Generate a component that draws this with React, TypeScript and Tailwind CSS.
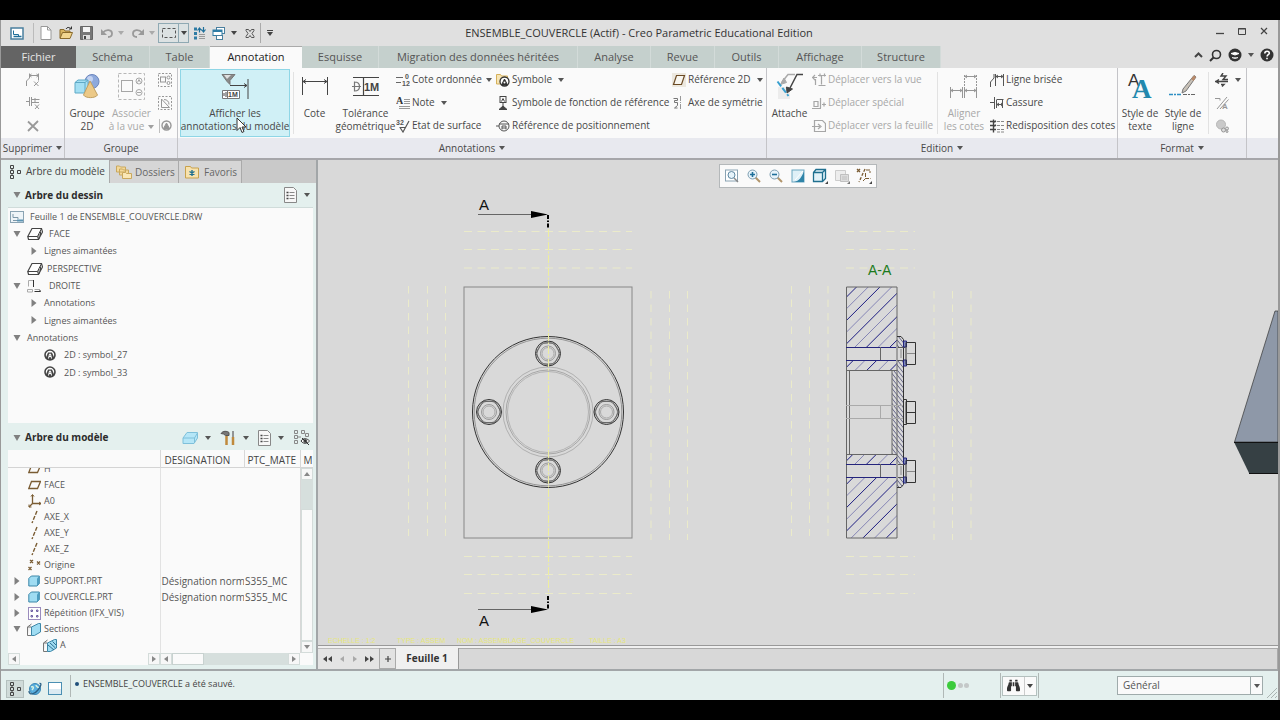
import type { ReactNode } from 'react';
import { FaBinoculars } from 'react-icons/fa';
import { clsx } from 'clsx';

type IconProps = { w?: number; h?: number; className?: string; children?: ReactNode };

const Svg = ({ w = 16, h = w, className, children }: IconProps) => (
  <svg width={w} height={h} viewBox={`0 0 ${w} ${h}`} fill="none" stroke="#555" className={clsx('shrink-0', className)}>
    {children}
  </svg>
);

const Caret = ({ className = 'text-[#555]' }: { className?: string }) => (
  <svg width="6" height="4" viewBox="0 0 6 4" className={clsx('shrink-0', className)}>
    <path d="M0 0h6L3 4z" fill="currentColor" />
  </svg>
);

const Arrow = ({ open }: { open?: boolean }) => (
  <svg width="8" height="8" viewBox="0 0 8 8" fill="#808080" className="shrink-0">
    {open ? <path d="M0.500 1h7L4 7z" /> : <path d="M1.500 0v8L6.500 4z" />}
  </svg>
);

/* ---------- quick access icons ---------- */

const LogoIcon = () => (
  <Svg w={14} h={13}>
    <rect x="1" y="1" width="12" height="11" fill="#fff" stroke="#4a7f9e" strokeWidth="1.500" />
    <path d="M3.500 3.500v4h5v2" stroke="#1f6f9a" />
    <path d="M3.500 9.500h8" stroke="#1f6f9a" strokeWidth="1.500" />
  </Svg>
);

const NewIcon = () => (
  <Svg w={12} h={14}>
    <path d="M1 .5h6.500l3.500 3.500v9.500h-10z" fill="#fff" stroke="#999" />
    <path d="M7.500.5v3.500h3.500" stroke="#999" />
  </Svg>
);

const OpenIcon = () => (
  <Svg w={14} h={14}>
    <path d="M1 12V3.500h4l1 1.500h5v2" fill="#d9b561" stroke="#8a6b2c" />
    <path d="M1 12.500l2.500-6h10l-2.500 6z" fill="#f2d68f" stroke="#8a6b2c" />
    <path d="M7 3c1-2 3-2 5-.5M12.500.5v2.500h-2.500" stroke="#333" />
  </Svg>
);

const SaveIcon = () => (
  <Svg w={13} h={14}>
    <path d="M.5.5h12v13h-12z" fill="#777" stroke="#666" />
    <path d="M3 1h7v5H3z" fill="#f4f4f4" stroke="none" />
    <path d="M3 9h7v4.500H3z" fill="#ddd" stroke="none" />
    <path d="M4 10h2v3H4z" fill="#444" stroke="none" />
  </Svg>
);

const UndoIcon = ({ flip }: { flip?: boolean }) => (
  <Svg w={14} h={12} className={flip ? '-scale-x-100' : ''}>
    <path d="M3 5.500C6 2 12 2.500 12 6.500c0 2.500-2 3.500-4 3.500" stroke="#9a9a9a" strokeWidth="1.800" />
    <path d="M1 2v6h6z" fill="#9a9a9a" stroke="none" />
  </Svg>
);

const SelectIcon = () => (
  <Svg w={14} h={10}>
    <rect x=".5" y=".5" width="13" height="9" stroke="#555" strokeDasharray="3 2" />
  </Svg>
);

const RegenIcon = () => (
  <Svg w={13} h={14}>
    <path d="M1 3h3M1 7.500h3M1 12h3" stroke="#2f7ca5" strokeWidth="3" />
    <path d="M6 8.500h6M6 10.500h6M6 12.500h6" stroke="#999" />
    <path d="M6.500 6.500V2.500M4.500 4.500l2-2.500 2 2.500M10.500 1v4.500M8.500 3.500l2 2.500 2-2.500" stroke="#1f6f9a" strokeWidth="1.200" />
  </Svg>
);

const WindowsIcon = () => (
  <Svg w={14} h={13}>
    <rect x="4.500" y=".5" width="8" height="6" fill="#fff" stroke="#4a7f9e" />
    <rect x="1" y="3" width="9" height="5.500" fill="#fff" stroke="#2f7ca5" />
    <path d="M1 4h9" stroke="#2f7ca5" strokeWidth="2" />
    <rect x="4.500" y="8.500" width="6" height="4" fill="#fff" stroke="#4a7f9e" />
  </Svg>
);

const CloseWinIcon = () => (
  <Svg w={10} h={9}>
    <path d="M1 .5h2.500L5 2.500 6.500.5H9v1L7 4.500l2 3v1H6.500L5 6.500 3.500 8.500H1v-1l2-3-2-3z" stroke="#555" />
  </Svg>
);

/* ---------- ribbon icons ---------- */

const DelJogIcon = () => (
  <Svg w={14} h={14} className="opacity-60">
    <path d="M.5 13V8l3-3V.500M12.500 .5v7M3.500 2.500h9M5.500 1L3.500 2.500 5.500 4M10.500 1l2 1.500-2 1.500M8 8.500l4.500 4.500M12.500 8.500L8 13" />
  </Svg>
);
const DelBreakIcon = () => (
  <Svg w={14} h={14} className="opacity-60">
    <path d="M0 5.500h3M3.500 1v9M5.500 1v9M5.500 3.500h8M6 6.500h7M9 2v4M9 8.500l4 4.500M13 8.500L9 13" />
  </Svg>
);
const CrossIcon = () => (
  <Svg w={12} h={12}>
    <path d="M1 1.500L11 11M11 1L1 11" stroke="#999" strokeWidth="1.800" />
  </Svg>
);

const GroupIcon = () => (
  <Svg w={26} h={26}>
    <circle cx="18" cy="7.500" r="7" fill="#8ea9dc" stroke="#6c86bd" />
    <circle cx="16" cy="5" r="3" fill="#c3d2f1" stroke="none" />
    <path d="M1 8.500l3-2.500h10v10l-3 3H1z" fill="#a4dff3" stroke="#5ea9c6" />
    <path d="M1 8.500h10v10M11 8.500L14 6" stroke="#5ea9c6" />
    <path d="M16 7l7.500 14c-2 3.500-12 3.500-14 0z" fill="#ecc987" stroke="#c0a063" />
  </Svg>
);

const AssocIcon = () => (
  <Svg w={28} h={28} className="opacity-50">
    <rect x=".5" y=".5" width="26" height="26" stroke="#777" strokeDasharray="3 2" />
    <rect x="3.500" y="7.500" width="11" height="11" />
    <circle cx="21" cy="8" r="3" />
    <path d="M19.500 9.500l1.500-3 1.500 3" />
    <circle cx="21" cy="19.500" r="3" />
    <path d="M19 19.500h4" />
  </Svg>
);

const SmallGroup1 = () => (
  <Svg w={14} h={14} className="opacity-60">
    <rect x=".5" y=".5" width="13" height="13" strokeDasharray="2 1.500" />
    <rect x="2.500" y="4" width="5" height="5" />
    <circle cx="10.500" cy="4.500" r="1.500" />
    <circle cx="10.500" cy="10" r="1.500" />
  </Svg>
);
const SmallGroup2 = () => (
  <Svg w={14} h={14} className="opacity-60">
    <rect x=".5" y=".5" width="13" height="13" strokeDasharray="2 1.500" />
    <path d="M3.500 3v8.500h8zM6 3.500c3 0 5 2 5 5" />
  </Svg>
);
const SmallGroup3 = () => (
  <Svg w={14} h={14} className="opacity-60">
    <path d="M1.500 0v14" stroke="#999" />
    <circle cx="8.500" cy="6.500" r="4.500" strokeWidth="1.400" />
    <path d="M5.500 9.500L8.500 4l3 5.500z" fill="#555" />
  </Svg>
);

const ShowAnnotIcon = () => (
  <Svg w={28} h={28}>
    <path d="M1 1.500h13l-5 6v4l-3-3z" fill="#8a8a8a" stroke="#777" />
    <path d="M3 2h7l-4 4z" fill="#e0e0e0" stroke="none" />
    <path d="M9 12.500h17M23 10.500l3 2-3 2M27 6v20" stroke="#444" />
    <path d="M1.500 17.500h17v8h-17zM6.500 17.500v8" fill="#fff" stroke="#777" />
    <path d="M3 20v3M5 19v5" stroke="#444" />
    <text x="7" y="24" fontSize="7" fontWeight="700" fill="#444" stroke="none" fontFamily="Liberation Sans, sans-serif">1M</text>
  </Svg>
);

const DimIcon = () => (
  <Svg w={28} h={28}>
    <path d="M1.500 4v18M26.500 4v18M2 8.500h24M5 6.500L2 8.500l3 2M23 6.500l3 2-3 2" stroke="#444" />
  </Svg>
);

const TolIcon = () => (
  <Svg w={28} h={28}>
    <path d="M1 4.500h26M1 22.500h26M11.500 5v17" stroke="#444" strokeWidth="1.200" />
    <path d="M0 13.500h9M2.500 8.500v10M2.500 9c3.500 0 5 2 5 4.500S6 18 2.500 18" stroke="#777" strokeWidth="1.200" />
    <text x="12" y="18" fontSize="11" fontWeight="700" fill="#444" stroke="none" fontFamily="Liberation Sans, sans-serif">1M</text>
  </Svg>
);

const OrdIcon = () => (
  <Svg w={14} h={14}>
    <path d="M0 4.500h7M0 9.500h5" stroke="#666" />
    <text x="9" y="6" fontSize="7" fontWeight="700" fill="#555" stroke="none" fontFamily="Liberation Sans, sans-serif">0</text>
    <text x="6" y="13" fontSize="7" fontWeight="700" fill="#555" stroke="none" fontFamily="Liberation Sans, sans-serif">12</text>
  </Svg>
);
const NoteIcon = () => (
  <Svg w={14} h={14}>
    <text x="0" y="8" fontSize="10" fontWeight="700" fill="#333" stroke="none" fontFamily="Liberation Serif, serif">A</text>
    <path d="M8 3.500h6M8 5.500h6M8 7.500h6M3 10.500h11M3 12.500h11" stroke="#999" />
  </Svg>
);
const SurfIcon = () => (
  <Svg w={14} h={14}>
    <text x="0" y="6" fontSize="7" fontWeight="700" fill="#555" stroke="none" fontFamily="Liberation Sans, sans-serif">32</text>
    <path d="M3.500 8.500h6M4 8.500l3 4.500L13 2" strokeWidth="1.200" />
  </Svg>
);
const SymbolIcon = () => (
  <Svg w={14} h={14}>
    <path d="M.5 11V1.500h4l1 1.500h6v8z" fill="#f7e5b4" stroke="#d5b05a" />
    <circle cx="8.500" cy="8.500" r="4.500" fill="#fff" stroke="#333" strokeWidth="1.300" />
    <path d="M5.500 12l3-6 3 6z" fill="#333" stroke="#333" />
    <circle cx="8.500" cy="9.500" r="1" fill="#fff" stroke="none" />
  </Svg>
);
const DatumFeatIcon = () => (
  <Svg w={14} h={14}>
    <rect x="4" y=".5" width="6" height="6" stroke="#444" />
    <path d="M5.500 5.500l1.500-3 1.500 3" stroke="#444" />
    <path d="M7 6.500v4M3 13.500h8L7 10z" fill="#444" stroke="#444" />
  </Svg>
);
const DatumTargetIcon = () => (
  <Svg w={14} h={14}>
    <circle cx="8" cy="7" r="5" />
    <path d="M0 7h3M3 5h10M6 10.500v-3.500h4v3.500M6 9h4" />
  </Svg>
);
const Ref2DIcon = () => (
  <Svg w={14} h={14}>
    <rect width="14" height="14" fill="#ece8df" stroke="none" />
    <path d="M4.500 2.500h8l-3 9H1.500z" fill="#f8f6f0" stroke="#6b4a24" strokeWidth="1.200" />
  </Svg>
);
const AxisSymIcon = () => (
  <Svg w={14} h={14}>
    <path d="M1.500 2.500h4v2h-3v2h3v3l-3 2.500h3" stroke="#777" />
    <path d="M8.500 0v14" stroke="#999" strokeDasharray="5 1 1 1" />
  </Svg>
);

const AttachIcon = () => (
  <Svg w={28} h={28}>
    <rect x="2" y="14" width="12" height="12" fill="#ececec" stroke="none" />
    <path d="M19 1.500h-7L6 9" stroke="#aaa" strokeWidth="1.500" />
    <path d="M8 5L4.500 11.500l6-2z" fill="#aaa" stroke="#aaa" />
    <path d="M27 1.500h-6L14 15" stroke="#444" strokeWidth="1.500" />
    <path d="M10.500 14l.5 6 5.500-4z" fill="#444" stroke="#444" />
    <path d="M1.500 8.500l11 14.500" stroke="#3aa0cf" strokeWidth="2" strokeDasharray="6 2" />
  </Svg>
);

const MoveViewIcon = () => (
  <Svg w={14} h={14} className="opacity-50">
    <path d="M0 4.500h5M3 2L.5 4.500 3 7M6 2.500h8M9.500 2.500v9M6.500 12.500h7M3.500 6v6M8 .5v3M12.500 .5v3" strokeWidth="1.200" />
  </Svg>
);
const MoveSpecIcon = () => (
  <Svg w={14} h={14} className="opacity-50">
    <path d="M0 12.500h9M8.500 2v10M2 5.500h4v5H2zM10 8.500h4M12 6.500v4" strokeWidth="1.200" />
  </Svg>
);
const MoveSheetIcon = () => (
  <Svg w={14} h={14} className="opacity-50">
    <path d="M2.500 1.500h8l3 3v8h-11zM0 7.500h8M6 5l3 2.500L6 10" strokeWidth="1.200" />
  </Svg>
);

const AlignIcon = () => (
  <Svg w={28} h={28} className="opacity-60">
    <path d="M.5 14v11M12.500 14v11M14.500 14v11M26.500 14v11M1 17.500h11M15 17.500h11M3 16l-2 1.500L3 19M10 16l2 1.500-2 1.500M17 16l-2 1.500 2 1.500M24 16l2 1.500-2 1.500M15 3.500h11M17 2l-2 1.500L17 5M24 2l2 1.500L24 5" />
    <path d="M14.500 2v12M26.500 2v12" strokeDasharray="2 1" />
  </Svg>
);
const JogIcon = () => (
  <Svg w={14} h={14}>
    <path d="M.5 14V9L4 5V1M13.500 1v12M5.500 1v12M6 3.500h7M8 2L6 3.500 8 5M11 2l2 1.500L11 5" />
  </Svg>
);
const BreakIcon = () => (
  <Svg w={14} h={14}>
    <path d="M0 6.500h4M4.500 1v12M6.500 4v8M12.500 4v8M6.500 3.500h7M7 8.500h6M9 7L7 8.500 9 10M11 7l2 1.500-2 1.500" />
  </Svg>
);
const CleanIcon = () => (
  <Svg w={14} h={14}>
    <path d="M0 2.500h6M0 6.500h6M0 10.500h6M3.500 .5v13M4 3l2-1M4 7l2-1" stroke="#444" strokeWidth="1.400" />
    <path d="M7 2.500h7M7 6.500h7M7 10.500h7M7 13h7" stroke="#888" strokeDasharray="3 1" />
  </Svg>
);

const TextStyleIcon = () => (
  <Svg w={28} h={28}>
    <text x="2" y="13" fontSize="17" fill="#333" stroke="none" fontFamily="Liberation Sans, sans-serif">A</text>
    <text x="6" y="25" fontSize="27" fontWeight="700" fill="#2288ad" stroke="none" fontFamily="Liberation Serif, serif">A</text>
  </Svg>
);
const LineStyleIcon = () => (
  <Svg w={28} h={28}>
    <path d="M14 16L25 2.500l2 1.500L17 18l-4 2z" fill="#c9c2b8" stroke="#777" />
    <path d="M22 6l3-3.500 2 1.500-2.500 4z" fill="#b98a6a" stroke="none" />
    <path d="M0 21.500h13" stroke="#2e8fc4" strokeWidth="1.500" strokeDasharray="4 1 2 1" />
    <path d="M14 21.500h13" stroke="#666" strokeDasharray="4 1 2 1" />
  </Svg>
);
const HatchToolIcon = () => (
  <Svg w={14} h={14}>
    <path d="M0 8.500h13M8 0L6 3h5L8 6.500h5M6 11.500h3l-2 2M4 6.500l-3 2 3 2" stroke="#444" strokeWidth="1.400" />
  </Svg>
);
const SlashAIcon = () => (
  <Svg w={14} h={14} className="opacity-60">
    <path d="M0 2.500h5v2M2 13L12 1M5 13L13.500 3.500" />
    <text x="7" y="13" fontSize="8" fontWeight="700" fill="#555" stroke="none" fontFamily="Liberation Sans, sans-serif">A</text>
  </Svg>
);
const BallIcon = () => (
  <Svg w={14} h={14} className="opacity-60">
    <circle cx="6" cy="5.500" r="4.500" fill="#aaa" stroke="#888" />
    <circle cx="8.500" cy="11" r="2" fill="#ccc" />
    <circle cx="12" cy="9.500" r="1.500" fill="#ccc" />
    <circle cx="12" cy="12.500" r="1" fill="#ccc" />
  </Svg>
);

/* ---------- tree icons ---------- */

const TreeIcon = () => (
  <Svg w={12} h={16}>
    <path d="M1.500 1.500h3v3h-3zM1.500 6.500h3v3h-3zM1.500 11.500h3v3h-3zM8.500 6.500h3v3h-3zM3 4.500v2M3 9.500v2" stroke="#444" />
  </Svg>
);
const FoldersIcon = () => (
  <Svg w={16} h={16}>
    <path d="M.5 8V2h3l1 1h5v5zM3.500 11V5h3l1 1h5v5z" fill="#f4d99a" stroke="#c9a85e" />
    <path d="M6.500 14.500V8.500h3l1 1h5v5z" fill="#fae7b6" stroke="#c9a85e" />
  </Svg>
);
const FavIcon = () => (
  <Svg w={14} h={14}>
    <path d="M.5 13V1.500h5l1 1.500h7v10z" fill="#f7e2ae" stroke="#c9a24c" />
    <path d="M7 5v6M4.500 6.500l5 3M9.500 6.500l-5 3" stroke="#1f6f8f" strokeWidth="1.400" />
  </Svg>
);
const ListIcon = () => (
  <Svg w={13} h={16}>
    <path d="M.5.5h9l3 3v12H.5z" fill="#f7f7f7" stroke="#888" />
    <path d="M2.500 5.500h2M2.500 8.500h2M2.500 11.500h2" stroke="#444" strokeWidth="1.500" />
    <path d="M5.500 5.500h5M5.500 8.500h5M5.500 11.500h5" stroke="#888" />
  </Svg>
);
const SheetIcon = () => (
  <Svg w={14} h={12}>
    <rect x=".5" y=".5" width="13" height="11" fill="#eef4f8" stroke="#8aa3b3" />
    <path d="M3 3v3.500h5V8M3 9.500h4" stroke="#7c97a8" />
    <path d="M7 9.500h6" stroke="#5c94b3" strokeWidth="2" />
  </Svg>
);
const ViewIcon = () => (
  <Svg w={16} h={14}>
    <path d="M.8 9.500L5 1.500h9.500l1 3.500-4 7.500H1.500z" stroke="#444" strokeWidth="1.200" fill="#fff" />
    <path d="M.8 9.500h9.700l4-8M10.500 9.500l1 3M12 12V7M13.500 9V4.500" stroke="#444" />
  </Svg>
);
const ProjIcon = () => (
  <Svg w={16} h={14}>
    <path d="M1.500 7.500v-6h4.500M.5 10.500h5v2.500h-5zM7.500 10.500h5.500" stroke="#aaa" />
    <path d="M6.500 1v7M7.500 12.500h6M13 11v2" stroke="#333" />
  </Svg>
);
const SymIcon = () => (
  <Svg w={12} h={12}>
    <circle cx="6" cy="6" r="5" fill="#fff" stroke="#444" strokeWidth="1.600" />
    <path d="M1.500 9.500L4 3.500h4l2.500 6L8 11H4z" fill="#444" stroke="none" />
    <path d="M4.500 9.500l1-4.500h1l1 4.500M5 7.500h2" stroke="#fff" />
  </Svg>
);
const PlaneIcon = () => (
  <Svg w={13} h={12}>
    <path d="M3.500 2.500h9l-3 7H.8z" stroke="#7a5c33" strokeWidth="1.300" />
  </Svg>
);
const CsysIcon = () => (
  <Svg w={13} h={14}>
    <path d="M4.500 1v8.500h8.500M4.500 9.500L1 13" stroke="#7a5c33" strokeWidth="1.300" />
    <path d="M3 2.500L4.500.500 6 2.500M11 8l2 1.500-2 1.500M1 10.500V13h2.500" stroke="#7a5c33" />
  </Svg>
);
const AxisIcon = () => (
  <Svg w={13} h={16}>
    <path d="M9 2L4 14" stroke="#7a5c33" strokeWidth="1.400" strokeDasharray="4 1.500" />
  </Svg>
);
const PointsIcon = () => (
  <Svg w={13} h={12}>
    <path d="M2 1l3 3M5 1L2 4M9 2.500l3 3M12 2.500l-3 3M.5 8l3 3M3.500 8l-3 3" stroke="#7a5c33" strokeWidth="1.300" />
  </Svg>
);
const PartIcon = () => (
  <Svg w={12} h={12}>
    <path d="M.8 3.500l2.500-2.500h8v7.500L9 11H.8z" fill="#9fdcf2" stroke="#3d87a8" />
    <path d="M9 11V3.500L11.300 1v7.500z" fill="#4d9dc0" stroke="none" />
  </Svg>
);
const PatternIcon = () => (
  <Svg w={13} h={13}>
    <rect x=".5" y=".5" width="12" height="12" fill="#fff" stroke="#9a8bbd" />
    <path d="M3 3h1.500v1.500H3zM8.500 3h1.500v1.500H8.500zM3 8.500h1.500v1.500H3zM8.500 8.500h1.500v1.500H8.500z" stroke="#6a5aa0" />
  </Svg>
);
const SectionIcon = ({ hatch }: { hatch?: boolean }) => (
  <Svg w={14} h={13}>
    <path d="M.5 12.500V4L4.500 1M.5 12.500h4M.5 4h4" stroke="#777" fill="#eee" />
    <path d="M4.500 12.500V4l7-3.500h2V9l-6 3.500z" fill="#9fdcf2" stroke="#3d87a8" />
    {hatch && <path d="M5 6l6 5M7 4l5.500 5M9.500 2.500L13 6" stroke="#2f6f93" />}
  </Svg>
);

/* ---------- ribbon building blocks ---------- */

type BigProps = { icon: ReactNode; lines: string[]; className: string; disabled?: boolean; caret?: boolean; hot?: boolean };

const BigButton = ({ icon, lines, className, disabled, caret, hot }: BigProps) => (
  <button
    disabled={disabled}
    className={clsx(
      'flex shrink-0 flex-col items-center text-[10px] leading-[13px]',
      disabled ? 'text-[#a8a8a8]' : 'text-[#484848]',
      hot ? 'border border-[#8fd6e6] bg-[#d0f0f6] pt-px' : 'pt-[3px]',
      className
    )}
  >
    <span className="mb-1 flex h-8 items-center">{icon}</span>
    {lines.map((line, i) => (
      <span key={line} className="flex items-center gap-1 whitespace-nowrap">
        {line}
        {caret && i === lines.length - 1 && <Caret className="text-[#a0a0a0]" />}
      </span>
    ))}
  </button>
);

type RowProps = { icon: ReactNode; label?: string; name?: string; disabled?: boolean; caret?: boolean; spread?: boolean };

const RowButton = ({ icon, label, name, disabled, caret, spread }: RowProps) => (
  <button
    disabled={disabled}
    aria-label={name}
    className={clsx('flex h-[23px] items-center text-[10px]', disabled ? 'text-[#a8a8a8]' : 'text-[#484848]')}
  >
    {icon}
    {label && <span className="ml-[2px] whitespace-nowrap">{label}</span>}
    {caret && <Caret className={spread ? 'ml-auto text-[#555]' : 'ml-[6px] text-[#555]'} />}
  </button>
);

type GroupProps = { title?: string; caret?: boolean; className: string; children?: ReactNode };

const Group = ({ title, caret, className, children }: GroupProps) => (
  <section className={clsx('flex flex-col border-r border-[#c4c4c8]', className)}>
    <div className="flex h-[70px] bg-[#fafafa]">{children}</div>
    <div className="flex h-[20px] items-center justify-center gap-1 bg-[#e8e9ef] text-[10px] text-[#484848]">
      {title}
      {caret && <Caret />}
    </div>
  </section>
);

const Sep = ({ className }: { className?: string }) => (
  <span className={clsx('my-1 w-px shrink-0 bg-[#e2e2e2]', className)} />
);

const tabs = [
  { label: 'Schéma', width: 'w-[74px]' },
  { label: 'Table', width: 'w-[60px]' },
  { label: 'Annotation', width: 'w-[92px]', active: true },
  { label: 'Esquisse', width: 'w-[77px]' },
  { label: 'Migration des données héritées', width: 'w-[199px]' },
  { label: 'Analyse', width: 'w-[73px]' },
  { label: 'Revue', width: 'w-[64px]' },
  { label: 'Outils', width: 'w-[64px]' },
  { label: 'Affichage', width: 'w-[83px]' },
  { label: 'Structure', width: 'w-[79px]' },
];

const TitleBar = () => (
  <header className="flex h-[26px] items-center bg-[#e0e0e0]">
    <div className="flex flex-1 items-center pl-[9px]">
      <LogoIcon />
      <span className="mr-[6px] ml-[9px] h-5 w-px bg-[#bbb]" />
      <div className="flex items-center gap-[7px]">
        <button aria-label="Nouveau"><NewIcon /></button>
        <button aria-label="Ouvrir"><OpenIcon /></button>
        <button aria-label="Enregistrer"><SaveIcon /></button>
        <button aria-label="Annuler" className="flex items-center gap-1">
          <UndoIcon />
          <Caret className="text-[#aaa]" />
        </button>
        <button aria-label="Rétablir" className="flex items-center gap-1">
          <UndoIcon flip />
          <Caret className="text-[#aaa]" />
        </button>
      </div>
      <button aria-label="Sélection" className="ml-[3px] flex h-[20px] w-[31px] items-center border border-[#8fa9b3] bg-[#dce2e3]">
        <span className="flex h-full w-[20px] items-center justify-center border-r border-[#8fa9b3]"><SelectIcon /></span>
        <Caret className="ml-[2px] text-[#444]" />
      </button>
      <button aria-label="Régénérer" className="ml-1"><RegenIcon /></button>
      <button aria-label="Fenêtres" className="ml-[6px] flex items-center gap-[5px]">
        <WindowsIcon />
        <Caret className="text-[#444]" />
      </button>
      <button aria-label="Fermer la fenêtre" className="ml-2"><CloseWinIcon /></button>
      <span className="ml-[5px] h-5 w-px bg-[#aaa]" />
      <button aria-label="Personnaliser" className="ml-[6px] flex flex-col items-center gap-px">
        <span className="h-px w-[6px] bg-[#444]" />
        <Caret className="text-[#444]" />
      </button>
    </div>
    <h1 className="text-[11px] text-[#333]">ENSEMBLE_COUVERCLE (Actif) - Creo Parametric Educational Edition</h1>
    <div className="flex flex-1 items-center justify-end gap-[14px] pr-[10px] pb-1">
      <button aria-label="Réduire"><Svg w={8} h={8}><path d="M0 6.500h8" stroke="#444" strokeWidth="1.300" /></Svg></button>
      <button aria-label="Agrandir"><Svg w={8} h={8}><path d="M.5 1.500h7v6h-7zM0 2h8" stroke="#444" /></Svg></button>
      <button aria-label="Fermer"><Svg w={8} h={8}><path d="M1 1l6 6M7 1L1 7" stroke="#444" strokeWidth="1.200" /></Svg></button>
    </div>
  </header>
);

const TabBar = () => (
  <nav className="flex h-[22px] bg-[#e0e0e0] text-[11px] text-[#555]">
    <button className="w-[75px] bg-[#646464] text-[#e6e6e6]">Fichier</button>
    {tabs.map((tab) => (
      <button
        key={tab.label}
        className={clsx(
          'shrink-0 whitespace-nowrap',
          tab.width,
          tab.active ? 'border-t border-[#aaa] bg-[#fafafa] text-[#222]' : 'border-r border-[#d3dbd9] bg-[#c5d0cd]'
        )}
      >
        {tab.label}
      </button>
    ))}
    <div className="flex flex-1 items-center justify-end gap-[6px] pr-1 pb-[4px]">
      <button aria-label="Réduire le ruban">
        <Svg w={9} h={6}><path d="M1 5l3.500-3.500L8 5" stroke="#444" strokeWidth="2" /></Svg>
      </button>
      <button aria-label="Rechercher">
        <Svg w={13} h={13}>
          <circle cx="7.500" cy="5.500" r="4" stroke="#333" strokeWidth="1.600" />
          <path d="M4.500 8.500L1 12" stroke="#333" strokeWidth="2" />
        </Svg>
      </button>
      <button aria-label="Communauté" className="flex items-center gap-[6px]">
        <Svg w={14} h={14}>
          <circle cx="7" cy="7" r="6.500" fill="#333" stroke="none" />
          <path d="M3 5.500l4-1 4 1-4 1.500zM4 9.500c1.500 1 4.500 1 6 0" fill="#fff" stroke="#fff" />
        </Svg>
        <Caret />
      </button>
      <button aria-label="Aide">
        <Svg w={14} h={14}>
          <circle cx="7" cy="7" r="6.500" fill="#333" stroke="none" />
          <path d="M4.800 5.500c0-3 4.500-3 4.500-.3 0 1.500-2.200 1.600-2.200 3.300M7 9.800v1.500" stroke="#fff" strokeWidth="1.600" />
        </Svg>
      </button>
    </div>
  </nav>
);

const Ribbon = () => (
  <div className="flex border-b-2 border-[#a6a6aa] bg-[#fafafa]">
    <Group title="Supprimer" caret className="w-[64px]">
      <div className="flex w-full flex-col items-center">
        <RowButton icon={<DelJogIcon />} name="Supprimer la ligne brisée" />
        <RowButton icon={<DelBreakIcon />} name="Supprimer la cassure" />
        <RowButton icon={<CrossIcon />} name="Supprimer" />
      </div>
    </Group>
    <Group title="Groupe" className="w-[113px]">
      <BigButton icon={<GroupIcon />} lines={['Groupe', '2D']} className="w-[44px]" />
      <BigButton icon={<AssocIcon />} lines={['Associer', 'à la vue']} className="w-[45px]" disabled caret />
      <div className="ml-[4px] flex flex-col">
        <RowButton icon={<SmallGroup1 />} name="Groupe de vues" />
        <RowButton icon={<SmallGroup2 />} name="Groupe d'esquisse" />
        <RowButton icon={<SmallGroup3 />} name="Groupe de symboles" />
      </div>
    </Group>
    <Group title="Annotations" caret className="w-[589px]">
      <div className="relative shrink-0 pt-px pl-[2px]">
        <BigButton
          icon={<ShowAnnotIcon />}
          lines={['Afficher les', 'annotations du modèle']}
          className="h-[68px] w-[110px]"
          hot
        />
        <svg width="11" height="17" viewBox="0 0 11 17" className="absolute top-[49px] left-[58px]">
          <path d="M1 1v12.500l3-3 2 5 2-1-2-4.500h4z" fill="#fff" stroke="#333" />
        </svg>
      </div>
      <Sep className="ml-[3px]" />
      <BigButton icon={<DimIcon />} lines={['Cote']} className="w-[41px]" />
      <BigButton icon={<TolIcon />} lines={['Tolérance', 'géométrique']} className="w-[61px]" />
      <div className="flex w-[96px] flex-col">
        <RowButton icon={<OrdIcon />} label="Cote ordonnée" caret spread />
        <RowButton icon={<NoteIcon />} label="Note" caret />
        <RowButton icon={<SurfIcon />} label="Etat de surface" />
      </div>
      <div className="ml-[4px] flex w-[176px] flex-col">
        <RowButton icon={<SymbolIcon />} label="Symbole" caret />
        <RowButton icon={<DatumFeatIcon />} label="Symbole de fonction de référence" />
        <RowButton icon={<DatumTargetIcon />} label="Référence de positionnement" />
      </div>
      <div className="flex w-[91px] flex-col">
        <RowButton icon={<Ref2DIcon />} label="Référence 2D" caret spread />
        <RowButton icon={<AxisSymIcon />} label="Axe de symétrie" />
      </div>
    </Group>
    <Group title="Edition" caret className="w-[351px]">
      <BigButton icon={<AttachIcon />} lines={['Attache']} className="w-[45px]" />
      <div className="flex w-[125px] flex-col">
        <RowButton icon={<MoveViewIcon />} label="Déplacer vers la vue" disabled />
        <RowButton icon={<MoveSpecIcon />} label="Déplacer spécial" disabled />
        <RowButton icon={<MoveSheetIcon />} label="Déplacer vers la feuille" disabled />
      </div>
      <Sep />
      <BigButton icon={<AlignIcon />} lines={['Aligner', 'les cotes']} className="w-[52px]" disabled />
      <div className="flex flex-col">
        <RowButton icon={<JogIcon />} label="Ligne brisée" />
        <RowButton icon={<BreakIcon />} label="Cassure" />
        <RowButton icon={<CleanIcon />} label="Redisposition des cotes" />
      </div>
    </Group>
    <Group title="Format" caret className="w-[129px]">
      <BigButton icon={<TextStyleIcon />} lines={['Style de', 'texte']} className="w-[44px]" />
      <BigButton icon={<LineStyleIcon />} lines={['Style de', 'ligne']} className="w-[42px]" />
      <Sep className="ml-[4px]" />
      <div className="ml-[6px] flex w-[26px] flex-col">
        <RowButton icon={<HatchToolIcon />} name="Hachures" caret spread />
        <RowButton icon={<SlashAIcon />} name="Style de flèche" />
        <RowButton icon={<BallIcon />} name="Bibliothèque" />
      </div>
    </Group>
    <div className="flex flex-1 flex-col">
      <div className="h-[70px]" />
      <div className="h-[20px] bg-[#e8e9ef]" />
    </div>
  </div>
);

/* ---------- side panel ---------- */

type Node = { label: string; pad: string; open?: boolean; leaf?: boolean; icon?: ReactNode };

const drawingTree: Node[] = [
  { label: 'Feuille 1 de ENSEMBLE_COUVERCLE.DRW', pad: 'pl-[2px] gap-[6px]', leaf: true, icon: <SheetIcon /> },
  { label: 'FACE', pad: 'pl-[5px] gap-[6px]', open: true, icon: <ViewIcon /> },
  { label: 'Lignes aimantées', pad: 'pl-[22px] gap-[6px]' },
  { label: 'PERSPECTIVE', pad: 'pl-[19px] gap-[4px]', leaf: true, icon: <ViewIcon /> },
  { label: 'DROITE', pad: 'pl-[5px] gap-[6px]', open: true, icon: <ProjIcon /> },
  { label: 'Annotations', pad: 'pl-[22px] gap-[6px]' },
  { label: 'Lignes aimantées', pad: 'pl-[22px] gap-[6px]' },
  { label: 'Annotations', pad: 'pl-[5px] gap-[6px]', open: true },
  { label: '2D : symbol_27', pad: 'pl-[36px] gap-[8px]', leaf: true, icon: <SymIcon /> },
  { label: '2D : symbol_33', pad: 'pl-[36px] gap-[8px]', leaf: true, icon: <SymIcon /> },
];

type PartRow = Node & { designation?: string; material?: string };

const modelTree: PartRow[] = [
  { label: 'H', pad: 'pl-[19px]', leaf: true, icon: <PlaneIcon /> },
  { label: 'FACE', pad: 'pl-[19px]', leaf: true, icon: <PlaneIcon /> },
  { label: 'A0', pad: 'pl-[19px]', leaf: true, icon: <CsysIcon /> },
  { label: 'AXE_X', pad: 'pl-[19px]', leaf: true, icon: <AxisIcon /> },
  { label: 'AXE_Y', pad: 'pl-[19px]', leaf: true, icon: <AxisIcon /> },
  { label: 'AXE_Z', pad: 'pl-[19px]', leaf: true, icon: <AxisIcon /> },
  { label: 'Origine', pad: 'pl-[19px]', leaf: true, icon: <PointsIcon /> },
  { label: 'SUPPORT.PRT', pad: 'pl-[5px]', icon: <PartIcon />, designation: 'Désignation norma', material: 'S355_MC' },
  { label: 'COUVERCLE.PRT', pad: 'pl-[5px]', icon: <PartIcon />, designation: 'Désignation norma', material: 'S355_MC' },
  { label: 'Répétition (IFX_VIS)', pad: 'pl-[5px]', icon: <PatternIcon /> },
  { label: 'Sections', pad: 'pl-[5px]', open: true, icon: <SectionIcon /> },
  { label: 'A', pad: 'pl-[35px]', leaf: true, icon: <SectionIcon hatch /> },
];

const ScrollBtn = ({ d, name }: { d: string; name: string }) => (
  <button aria-label={name} className="flex h-[12px] w-[12px] shrink-0 items-center justify-center border border-[#d4dcda] bg-[#f7f7f7]">
    <svg width="6" height="6" viewBox="0 0 6 6"><path d={d} fill="#888" /></svg>
  </button>
);

const LEFT = 'M5 0v6L1 3z';
const RIGHT = 'M1 0v6l4-3z';

const ModelTree = () => (
  <div className="bg-[#fafafa]">
    <table className="w-full table-fixed border-collapse text-left text-[9px] text-[#555]">
      <colgroup>
        <col />
        <col className="w-[84px]" />
        <col className="w-[56px]" />
        <col className="w-[13px]" />
      </colgroup>
      <thead>
        <tr className="h-[18px] border-b border-[#d4d4d4] align-bottom text-[10px] text-[#444]">
          <th className="border-r border-[#d8d8d8] p-0" aria-label="Nom" />
          <th className="overflow-hidden border-r border-[#d8d8d8] p-0 pl-1 leading-[14px] font-normal">DESIGNATION</th>
          <th className="overflow-hidden border-r border-[#d8d8d8] p-0 pl-[3px] leading-[14px] font-normal whitespace-nowrap">PTC_MATE</th>
          <th className="overflow-hidden p-0 pl-[3px] leading-[14px] font-normal">M</th>
        </tr>
      </thead>
      <tbody>
        {modelTree.map((row, i) => (
          <tr key={row.label}>
            <td className="overflow-hidden border-r border-[#e2e2e2] p-0">
              <div className={clsx('flex items-end overflow-hidden', i === 0 ? 'h-[9px]' : 'h-4')}>
                <div className={clsx('flex h-4 shrink-0 items-center', row.pad)}>
                  {!row.leaf && <span className="mr-[6px] flex"><Arrow open={row.open} /></span>}
                  <span className="flex w-[14px] justify-center">{row.icon}</span>
                  <span className="ml-[3px] whitespace-nowrap">{row.label}</span>
                </div>
              </div>
            </td>
            <td className="overflow-hidden p-0 pl-px text-[10px] leading-4 whitespace-nowrap">{row.designation}</td>
            <td className="overflow-hidden p-0 pl-px text-[10px] leading-4 whitespace-nowrap">{row.material}</td>
            {i === 0 && (
              <td rowSpan={modelTree.length} className="h-px border-l border-[#d8d8d8] p-0">
                <div className="flex h-[185px] flex-col">
                  <ScrollBtn name="Monter" d="M0 5h6L3 1z" />
                  <div className="h-[29px] bg-[#d6dfdd]" />
                  <div className="flex-1 border border-[#d4dcda] bg-[#fafafa]" />
                  <ScrollBtn name="Descendre" d="M0 1h6L3 5z" />
                </div>
              </td>
            )}
          </tr>
        ))}
      </tbody>
    </table>
    <div className="flex h-[12px]">
      <div className="flex flex-1">
        <ScrollBtn name="Gauche" d={LEFT} />
        <div className="flex-1" />
        <ScrollBtn name="Droite" d={RIGHT} />
      </div>
      <div className="flex w-[140px]">
        <ScrollBtn name="Gauche" d={LEFT} />
        <div className="w-[32px] border border-[#c8d2d0] bg-[#fafafa]" />
        <div className="flex-1 bg-[#d6dfdd]" />
        <ScrollBtn name="Droite" d={RIGHT} />
      </div>
      <div className="w-[13px]" />
    </div>
  </div>
);

const SidePanel = () => (
  <aside className="flex w-[317px] shrink-0 flex-col border-r-2 border-[#a2a6a8] bg-[#e4f0ee]">
    <div className="flex h-[23px] bg-[#c9c9c9] text-[10px] text-[#666]">
      <button className="flex w-[108px] items-center gap-[5px] bg-[#e4f0ee] pl-[8px] whitespace-nowrap text-[#444]">
        <TreeIcon />
        Arbre du modèle
      </button>
      <button className="flex w-[70px] items-center gap-[3px] border-x border-t border-[#aaa] bg-[#d6d6d6] pl-[6px]">
        <FoldersIcon />
        Dossiers
      </button>
      <button className="flex w-[63px] items-center gap-[5px] border-t border-r border-[#aaa] bg-[#d6d6d6] pl-[6px]">
        <FavIcon />
        Favoris
      </button>
    </div>
    <div className="mr-[3px] ml-[7px] flex h-[25px] items-center border-b border-[#d0dcda]">
      <span className="ml-[5px]"><Arrow open /></span>
      <h2 className="ml-[4px] text-[10px] font-bold text-[#2c2c2c]">Arbre du dessin</h2>
      <button aria-label="Réglages du dessin" className="mr-[3px] ml-auto flex items-center gap-[7px]">
        <ListIcon />
        <Caret />
      </button>
    </div>
    <div className="mr-[3px] ml-[7px] flex-1 bg-[#fafafa]">
      <ul className="grid h-[173px] auto-rows-fr text-[9px] text-[#555]">
        {drawingTree.map((node, i) => (
          <li key={i} className={clsx('flex items-center whitespace-nowrap', node.pad)}>
            {!node.leaf && <Arrow open={node.open} />}
            {node.icon}
            <span>{node.label}</span>
          </li>
        ))}
      </ul>
    </div>
    <div className="mt-[3px] mr-[3px] ml-[7px] flex h-[24px] items-center">
      <span className="ml-[5px]"><Arrow open /></span>
      <h2 className="ml-[4px] text-[10px] font-bold text-[#2c2c2c]">Arbre du modèle</h2>
      <div className="mr-[3px] ml-auto flex items-center gap-[9px]">
        <button aria-label="Afficher" className="flex items-center gap-[6px]">
          <Svg w={17} h={14}>
            <path d="M1 7l4-5.500h10.500v5.500L12 12.500H1z" fill="#b5e6f7" stroke="#7fc0da" />
            <path d="M1 7h11.500v5M12.500 7l3-5" stroke="#7fc0da" />
          </Svg>
          <Caret />
        </button>
        <button aria-label="Réglages" className="flex items-center gap-[7px]">
          <Svg w={16} h={16}>
            <path d="M1 3.500c2-3 6-2.500 8-1v3H5.500L3.500 4z" fill="#777" stroke="#555" />
            <path d="M6.500 6v9" stroke="#c08a3c" strokeWidth="2.500" />
            <path d="M13 1v6" stroke="#777" strokeWidth="1.500" />
            <path d="M13 7v8" stroke="#c08a3c" strokeWidth="2.500" />
          </Svg>
          <Caret />
        </button>
        <button aria-label="Liste" className="flex items-center gap-[7px]">
          <ListIcon />
          <Caret />
        </button>
        <button aria-label="Masquer">
          <Svg w={17} h={17}>
            <path d="M1.500 1.500h3v3h-3zM1.500 6.500h3v3h-3zM1.500 11.500h3v3h-3zM8.500 1.500h3v3h-3zM12.500 4.500h3v3h-3zM5 8h3" stroke="#888" />
            <path d="M8 12c2-3 6-3 8.500 0-2.500 3-6.500 3-8.500 0z" fill="#fff" stroke="#333" />
            <circle cx="12.300" cy="12" r="1.500" fill="#333" />
            <path d="M9 9l7 7" stroke="#333" />
          </Svg>
        </button>
      </div>
    </div>
    <div className="mr-[3px] mb-[4px] ml-[7px]">
      <ModelTree />
    </div>
  </aside>
);

/* ---------- drawing ---------- */

const YELLOW = '#ebebca';
const FRONT_BOLTS = [[548, 353.5], [548, 470.5], [489, 412], [606.5, 412]];
const HATCH = Array.from({ length: 26 }, (_, k) => 297.5 + k * 11.7);
const FINE_HATCH = Array.from({ length: 36 }, (_, k) => 326 + k * 5);

const snapRows = (x1: number, x2: number) =>
  [231.5, 249.5, 268, 556.5, 574.5, 593.5].map((y) => <path key={`${x1}-${y}`} d={`M${x1} ${y}H${x2}`} strokeDasharray="8 5.500" />);
const snapCols = (xs: number[], y1: number, y2: number) =>
  xs.map((x) => <path key={x} d={`M${x} ${y1}V${y2}`} strokeDasharray="7.500 6" />);

const Drawing = () => (
  <svg
    viewBox="318 160 960 485"
    preserveAspectRatio="xMinYMin slice"
    className="absolute inset-0 h-full w-full"
    fill="none"
    fontFamily="Liberation Sans, sans-serif"
  >
    <defs>
      <clipPath id="block">
        <path d="M847 287h50v60h-50zM847 360h50v10h-50zM847 454h50v10h-50zM847 477h50v61h-50z" />
      </clipPath>
      <clipPath id="cover">
        <path d="M892 370h11.500v84H892zM897 336h4l2.500 3v8H897zM897 360h6.500v10H897zM897 454h6.500v10H897zM897 477h6.500v8l-2.500 2h-4z" />
      </clipPath>
    </defs>

    <g stroke={YELLOW}>
      {snapRows(464, 632)}
      {snapRows(846, 915)}
      {snapCols([408.5, 427.5, 445.5, 791.5, 809.5, 828], 286, 536)}
      {snapCols([651, 669.5, 687.5, 934, 952.5, 971], 291, 540)}
    </g>

    <rect x="464" y="287" width="168" height="251" stroke="#888" />
    <circle cx="548" cy="412" r="75.500" stroke="#333" />
    <circle cx="548" cy="412" r="73.800" stroke="#777" strokeWidth=".7" />
    <circle cx="548" cy="412" r="45" stroke="#b0b0b0" />
    <circle cx="548" cy="412" r="42" stroke="#999" strokeWidth=".8" />
    <circle cx="548" cy="412" r="40.500" stroke="#aaa" strokeWidth=".8" />
    {FRONT_BOLTS.map(([x, y]) => (
      <g key={`${x}-${y}`}>
        <circle cx={x} cy={y} r="12.500" stroke="#333" />
        <path d={`M${x - 12} ${y}l6 -10.500h12l6 10.500-6 10.500h-12z`} stroke="#555" strokeWidth=".8" />
        <circle cx={x} cy={y} r="11" stroke="#666" strokeWidth=".8" />
        <circle cx={x} cy={y} r="7.500" stroke="#999" />
        <circle cx={x} cy={y} r="6" stroke="#aaa" />
      </g>
    ))}
    <path d="M548.500 229V594" stroke="#eeee9e" strokeDasharray="8 1.500 2 1.500" />

    <path d="M478 214.500h56M478 609.500h56" stroke="#666" />
    <path d="M531 211l17 3.500-17 3.500zM531 606l17 3.500-17 3.500z" fill="#000" />
    <path d="M548 215v14M548 596v14" stroke="#000" strokeWidth="2" strokeDasharray="4 1.500 1.500 1.500" />
    <text x="479" y="210" fontSize="15" fill="#111">A</text>
    <text x="479" y="626" fontSize="15" fill="#111">A</text>

    <g clipPath="url(#block)">
      {HATCH.map((y, k) => (
        <path key={y} d={`M846 ${y}l52 -52`} stroke={k % 2 ? '#8585b5' : '#1c1c80'} />
      ))}
    </g>
    <g clipPath="url(#cover)">
      {FINE_HATCH.map((y) => (
        <path key={y} d={`M890 ${y - 10}l16 20`} stroke="#66668a" />
      ))}
    </g>
    <path d="M846.500 287h50.500v251h-50.500z" stroke="#666" />
    <path d="M846 347.500h50M846 360.500h50M846 464.500h50M846 477.500h50" stroke="#24247c" />
    <path d="M880.500 347v13M880.500 464v13M846 370.500h51M846 454.500h51M849.500 370v84M892 370v84" stroke="#666" />
    <path d="M846 405.500h57M846 418.500h57M880.500 405v13" stroke="#aaa" />
    <path d="M897 336.500h4l2.500 3v145l-2.500 3H897" stroke="#333" />
    <path d="M898 347.500h7M898 360.500h7M898 464.500h7M898 477.500h7" stroke="#555" />
    <path d="M903.500 341h3v6h-3zM903.500 360h3v6h-3zM903.500 458h3v6h-3zM903.500 477h3v6h-3z" fill="#7d88c0" stroke="#24247c" />
    <path d="M906 342.500h9.500v22H906zM906 460.500h9.500v22H906zM903.500 399.500h3v25h-3M906 401.500h9.500v22H906zM906 412.500h9" stroke="#333" />
    <path d="M906 353.500h9M906 471.500h9M901 349v9M901 466v9" stroke="#888" />
    <text x="868" y="275" fontSize="14" fill="#1b7a1b">A-A</text>

    <path d="M1275 311h3v131h-43.500z" fill="#8e98a8" stroke="#333" strokeWidth=".7" />
    <path d="M1234.500 443h43.500v30h-29z" fill="#364044" />
    <path d="M1249 473.500h29M1234 442.500h44" stroke="#111" />

    <g fontSize="7" fill="#e6e67c">
      <text x="328" y="643">ECHELLE : 1:2</text>
      <text x="397" y="643">TYPE : ASSEM</text>
      <text x="457" y="643">NOM : ASSEMBLAGE_COUVERCLE</text>
      <text x="589" y="643">TAILLE : A3</text>
    </g>
  </svg>
);

const Magnifier = ({ children }: { children?: ReactNode }) => (
  <Svg w={16} h={16}>
    <path d="M9.500 9.500L14 14" stroke="#b0946a" strokeWidth="2" />
    <circle cx="6.500" cy="6.500" r="4.500" fill="#e6f3fa" stroke="#7d9db0" />
    {children}
  </Svg>
);

const viewTools = [
  {
    name: 'Recadrer',
    icon: (
      <Svg w={16} h={16}>
        <rect x="1.500" y="2" width="12" height="11" stroke="#8aa3b3" fill="#fff" />
        <path d="M10 10l4 4" stroke="#888" strokeWidth="1.500" />
        <circle cx="7.500" cy="7" r="3.500" fill="#e6f3fa" stroke="#5d86a0" />
      </Svg>
    ),
  },
  { name: 'Zoom avant', icon: <Magnifier><path d="M4 6.500h5M6.500 4v5" stroke="#1f6f9a" strokeWidth="1.600" /></Magnifier> },
  { name: 'Zoom arrière', icon: <Magnifier><path d="M4 6.500h5" stroke="#1f6f9a" strokeWidth="1.600" /></Magnifier> },
  {
    name: 'Repeindre',
    icon: (
      <Svg w={16} h={16}>
        <rect x="2" y="2" width="12" height="12" fill="#dff0f7" stroke="#6aa5bf" />
        <path d="M14 3v11H4c5-1 8-5 10-11z" fill="#2f84a8" stroke="none" />
        <path d="M5 12l8-9" stroke="#fff" />
      </Svg>
    ),
  },
  {
    name: 'Style d’affichage',
    icon: (
      <Svg w={16} h={16}>
        <path d="M1.500 4.500L4 1.500h9.500v9l-3 3h-9zM1.500 4.500h9v9M10.500 4.500l3-3" fill="#e3f2f8" stroke="#1f6f8f" strokeWidth="1.300" />
        <path d="M16 13v3h-3z" fill="#444" stroke="none" />
      </Svg>
    ),
  },
  {
    name: 'Vues enregistrées',
    icon: (
      <Svg w={16} h={16}>
        <path d="M1.500 2.500h10v10h-10z" fill="#ededed" stroke="#ccc" />
        <path d="M6.500 6.500h8v7h-8zM8 9h5M8 11h5" fill="#ddd" stroke="#c0c0c0" />
        <path d="M16 13v3h-3z" fill="#777" stroke="none" />
      </Svg>
    ),
  },
  {
    name: 'Filtres de repères',
    icon: (
      <Svg w={16} h={16}>
        <path d="M1 1l3 3M4 1L1 4" stroke="#7a5c33" strokeWidth="1.300" />
        <path d="M9 1L3 14" stroke="#7a5c33" strokeWidth="1.300" strokeDasharray="3 1.500" />
        <path d="M9.500 5v5.500h5M9.500 10.500l-2.500 2.500M10 2h4v3" stroke="#7a5c33" strokeDasharray="4 1" />
        <path d="M16 13v3h-3z" fill="#444" stroke="none" />
      </Svg>
    ),
  },
];

const SheetBar = () => (
  <div className="flex h-[24px] border-t border-[#999] bg-[#f0f0f0] pt-[2px] text-[10px] text-[#333]">
    <div className="flex w-[61px] items-center justify-around border-t border-[#bbb] bg-[#e4e4e4] px-px">
      <button aria-label="Première feuille"><Svg w={9} h={6}><path d="M4 0v6L0 3zM9 0v6L5 3z" fill="#444" stroke="none" /></Svg></button>
      <button aria-label="Feuille précédente"><Svg w={6} h={6}><path d="M5 0v6L1 3z" fill="#aaa" stroke="none" /></Svg></button>
      <button aria-label="Feuille suivante"><Svg w={6} h={6}><path d="M1 0v6l4-3z" fill="#aaa" stroke="none" /></Svg></button>
      <button aria-label="Dernière feuille"><Svg w={9} h={6}><path d="M0 0v6l4-3zM5 0v6l4-3z" fill="#444" stroke="none" /></Svg></button>
    </div>
    <button aria-label="Ajouter une feuille" className="flex w-[17px] items-center justify-center border border-[#aaa] bg-[#e2e2e2]">
      <Svg w={6} h={6}><path d="M3 0v6M0 3h6" stroke="#444" strokeWidth="1.200" /></Svg>
    </button>
    <button className="w-[63px] border-r border-[#999] font-bold">Feuille 1</button>
    <div className="flex-1 border-t border-r border-[#aaa] bg-[#d8d8d8]" />
  </div>
);

const Workspace = () => (
  <main className="flex min-w-0 flex-1 flex-col bg-[#d9d9d9]">
    <div className="relative flex-1 overflow-hidden">
      <Drawing />
      <div className="absolute top-[4px] left-[401px] flex h-[24px] items-center gap-[6px] border border-[#b4b8ba] bg-[#fafafa] px-[4px]">
        {viewTools.map((tool) => (
          <button key={tool.name} aria-label={tool.name}>{tool.icon}</button>
        ))}
      </div>
    </div>
    <SheetBar />
  </main>
);

const StatusBar = () => (
  <footer className="flex h-[31px] items-center border-t-2 border-[#a2a6a8] bg-[#e4f0ee]">
    <button aria-label="Navigateur" className="mt-[6px] ml-[5px] flex h-[18px] w-[18px] items-center justify-center border border-[#b4c0be] bg-[#d0dbd9]">
      <TreeIcon />
    </button>
    <button aria-label="Navigateur Web" className="mt-[6px] ml-[4px]">
      <Svg w={14} h={14}>
        <circle cx="7" cy="7" r="5.500" fill="#58aede" stroke="#3b87b5" />
        <path d="M3 5c3-1 3 1 1 3M8 3c0 2 2 2 3 3" stroke="#d5f0e0" strokeWidth="1.500" />
        <path d="M1 9c0 5 6 3 9-1s4-7 1.500-6.500" stroke="#2a5f85" strokeWidth="1.300" />
      </Svg>
    </button>
    <button aria-label="Plein écran" className="mt-[6px] ml-[6px]">
      <Svg w={14} h={13}>
        <rect x=".5" y=".5" width="13" height="12" fill="#fff" stroke="#4a8fb3" />
        <path d="M1 7h12v5H1z" fill="#dbeaf2" stroke="none" />
      </Svg>
    </button>
    <span className="ml-[8px] h-[22px] w-px bg-[#b0b8b6]" />
    <p className="mb-[4px] ml-[4px] flex items-center gap-1 text-[9px] text-[#444]">
      <span className="h-1 w-1 rounded-full bg-[#1f4f7a]" />
      ENSEMBLE_COUVERCLE a été sauvé.
    </p>
    <div className="ml-auto flex h-[25px] items-center">
      <div className="flex h-full w-[57px] items-center gap-px border-l border-[#b0b8b6] pl-[3px]">
        <span className="mr-px h-[9px] w-[9px] rounded-full bg-[#3ccb3c]" />
        <span className="h-[5px] w-[5px] rounded-full bg-[#c4c8c8]" />
        <span className="h-[5px] w-[5px] rounded-full bg-[#c4c8c8]" />
      </div>
      <div className="flex h-full items-center border-x border-[#b0b8b6] px-px">
        <button aria-label="Rechercher" className="flex h-[20px] w-[35px] items-center border border-[#b4c0be] bg-[#fafafa]">
          <span className="flex h-full w-[22px] items-center justify-center border-r border-[#ccc]"><FaBinoculars size={13} color="#333" /></span>
          <Caret className="ml-[2px] text-[#444]" />
        </button>
      </div>
      <div className="relative mr-[3px] ml-[78px]">
        <select aria-label="Filtre de sélection" className="block h-[19px] w-[146px] appearance-none border border-[#9fabab] bg-[#fafafa] pl-[5px] text-[10px] text-[#555]">
          <option>Général</option>
        </select>
        <span className="pointer-events-none absolute inset-y-px right-px flex w-[12px] items-center justify-center border-l border-[#9fabab]">
          <Caret />
        </span>
      </div>
      <Svg w={11} h={11} className="mr-px self-end">
        <path d="M1 11L11 1M5 11l6-6M9 11l2-2" stroke="#aab4b2" />
      </Svg>
    </div>
  </footer>
);

export default function App() {
  return (
    <div className="flex min-h-screen flex-col bg-black py-5 font-['Open_Sans','Noto_Sans',sans-serif]">
      <div className="flex flex-1 flex-col border-r-2 border-l border-[#999]">
        <TitleBar />
        <TabBar />
        <Ribbon />
        <div className="flex flex-1">
          <SidePanel />
          <Workspace />
        </div>
        <StatusBar />
      </div>
    </div>
  );
}
